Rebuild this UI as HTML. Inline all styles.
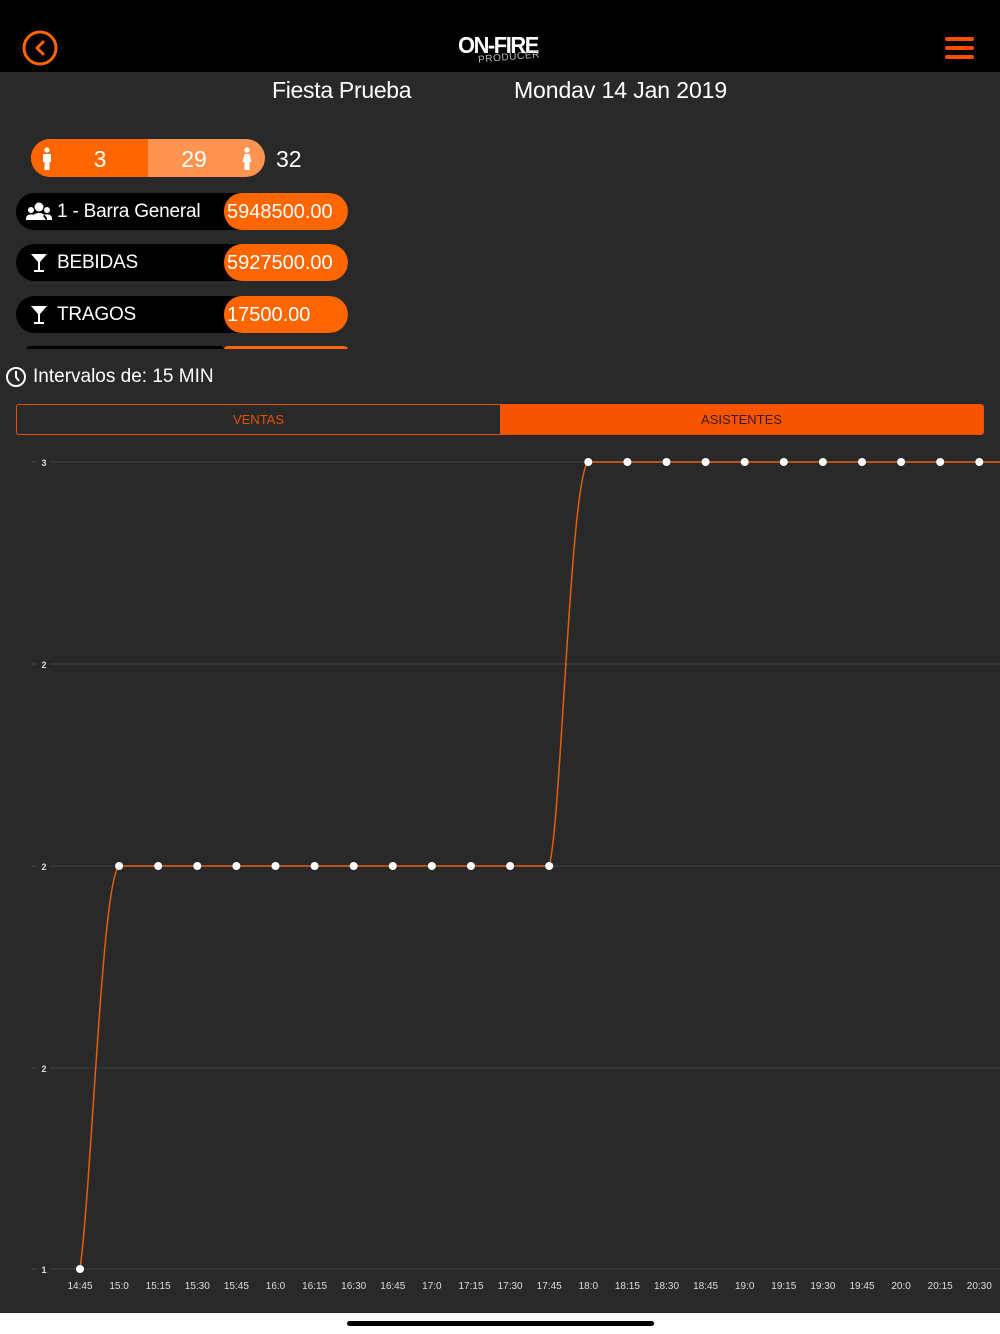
<!DOCTYPE html>
<html><head><meta charset="utf-8"><style>
*{margin:0;padding:0;box-sizing:border-box}
body{width:1000px;height:1334px;background:#292929;font-family:"Liberation Sans",sans-serif;position:relative;overflow:hidden;color:#fff}
.hdr{position:absolute;left:0;top:0;width:1000px;height:72px;background:#000}
.abs{position:absolute}
.row{position:absolute;left:16px;width:332px;height:37px;background:#000;border-radius:19px;overflow:hidden}
.row .v{position:absolute;left:208px;top:0;width:124px;height:37px;background:#ff6600;border-radius:18px;font-size:20px;line-height:38px;padding-left:3px}
.row .l{position:absolute;left:41px;top:0;font-size:19px;line-height:38px;letter-spacing:-0.2px}
</style></head><body>
<div class="hdr"></div>
<svg class="abs" style="left:22px;top:30px" width="38" height="38" viewBox="0 0 38 38"><circle cx="18" cy="18" r="16" fill="none" stroke="#ff6600" stroke-width="3"/><path d="M21 12 L15 18 L21 24" fill="none" stroke="#ff6600" stroke-width="3" stroke-linecap="round" stroke-linejoin="round"/></svg>
<div class="abs" style="left:458px;top:32px;font-weight:bold;font-size:23px;letter-spacing:-1.5px;line-height:26px;transform:scaleX(0.95);transform-origin:left">ON-FIRE</div>
<div class="abs" style="left:478px;top:52px;font-size:10px;letter-spacing:0.6px;color:#bbb;transform:rotate(-5deg)">PRODUCER</div>
<div class="abs" style="left:945px;top:37px;width:29px;height:4px;background:#ff4d00;border-radius:2px"></div>
<div class="abs" style="left:945px;top:46px;width:29px;height:4px;background:#ff4d00;border-radius:2px"></div>
<div class="abs" style="left:945px;top:55px;width:29px;height:4px;background:#ff4d00;border-radius:2px"></div>
<div class="abs" style="left:272px;top:77px;font-size:23px;letter-spacing:-0.3px">Fiesta Prueba</div>
<div class="abs" style="left:514px;top:77px;font-size:23px;letter-spacing:-0.1px">Mondav 14 Jan 2019</div>
<div class="abs" style="left:31px;top:139px;width:234px;height:38px;border-radius:19px;overflow:hidden;background:#ff9450">
<div class="abs" style="left:0;top:0;width:117px;height:38px;background:#ff6600"></div>
<div class="abs" style="left:0;top:0;width:138px;text-align:center;font-size:23px;line-height:40px">3</div>
<div class="abs" style="left:117px;top:0;width:92px;text-align:center;font-size:23px;line-height:40px">29</div>
<svg class="abs" style="left:10px;top:8px" width="12" height="24" viewBox="0 0 12 24"><circle cx="6" cy="3" r="2.6" fill="#fff"/><path d="M2 7h8v8h-1.5v8h-5v-8H2z" fill="#fff"/></svg>
<svg class="abs" style="left:210px;top:8px" width="12" height="24" viewBox="0 0 12 24"><circle cx="6" cy="3" r="2.6" fill="#fff"/><path d="M3.5 7h5l2 8h-2v8h-5v-8h-2z" fill="#fff"/></svg>
</div>
<div class="abs" style="left:276px;top:146px;font-size:23px">32</div>
<div class="row" style="top:193px"><svg class="abs" style="left:10px;top:9px" width="26" height="20" viewBox="0 0 26 20"><circle cx="13" cy="5" r="4.5" fill="#fff"/><circle cx="5" cy="8" r="3" fill="#fff"/><circle cx="21" cy="8" r="3" fill="#fff"/><path d="M5 18a8 7 0 0 1 16 0z M0 16a5 4 0 0 1 9 -2l-3 4H0z M26 16a5 4 0 0 0 -9 -2l3 4h6z" fill="#fff"/></svg><div class="l">1 - Barra General</div><div class="v">5948500.00</div></div>
<div class="row" style="top:244px"><svg class="abs" style="left:14px;top:9px" width="18" height="20" viewBox="0 0 18 20"><path d="M1 1h16l-7 8v8h4v2H4v-2h4V9z" fill="#fff"/></svg><div class="l">BEBIDAS</div><div class="v">5927500.00</div></div>
<div class="row" style="top:296px"><svg class="abs" style="left:14px;top:9px" width="18" height="20" viewBox="0 0 18 20"><path d="M1 1h16l-7 8v8h4v2H4v-2h4V9z" fill="#fff"/></svg><div class="l">TRAGOS</div><div class="v">17500.00</div></div>
<div class="abs" style="left:16px;top:346px;width:332px;height:3px;overflow:hidden"><div class="abs" style="left:10px;top:0;width:198px;height:8px;background:#000;border-radius:8px"></div><div class="abs" style="left:208px;top:0;width:124px;height:8px;background:#ff6600;border-radius:8px"></div></div>
<svg class="abs" style="left:5px;top:366px" width="22" height="22" viewBox="0 0 22 22"><circle cx="11" cy="11" r="9" fill="none" stroke="#fff" stroke-width="2"/><path d="M11 5v6l3 4" fill="none" stroke="#fff" stroke-width="2"/></svg>
<div class="abs" style="left:33px;top:366px;font-size:19px">Intervalos de: 15 MIN</div>
<div class="abs" style="left:16px;top:404px;width:968px;height:31px;border:1px solid #e55000;border-radius:3px;overflow:hidden">
<div class="abs" style="left:483px;top:0;width:485px;height:31px;background:#f75400"></div>
<div class="abs" style="left:0;top:0;width:483px;text-align:center;line-height:29px;font-size:13px;color:#e55000">VENTAS</div>
<div class="abs" style="left:483px;top:0;width:483px;text-align:center;line-height:29px;font-size:13px;color:#3a1a00">ASISTENTES</div>
</div>
<svg class="abs" style="left:0;top:0" width="1000" height="1334" viewBox="0 0 1000 1334" font-family="Liberation Sans, sans-serif">
<g stroke="#3a3a3a" stroke-width="1.5"><line x1="50" y1="462" x2="1000" y2="462"/><line x1="50" y1="664" x2="1000" y2="664"/><line x1="50" y1="866" x2="1000" y2="866"/><line x1="50" y1="1068" x2="1000" y2="1068"/><line x1="50" y1="1269" x2="1000" y2="1269"/>
<line x1="32" y1="462" x2="37" y2="462"/><line x1="32" y1="664" x2="37" y2="664"/><line x1="32" y1="866" x2="37" y2="866"/><line x1="32" y1="1068" x2="37" y2="1068"/><line x1="32" y1="1269" x2="37" y2="1269"/></g>
<g fill="#ddd" font-size="9" font-weight="bold" text-anchor="middle"><text x="44" y="466">3</text><text x="44" y="668">2</text><text x="44" y="870">2</text><text x="44" y="1072">2</text><text x="44" y="1273">1</text></g>
<path d="M80 1269 C92 1180 102 880 119 866 L549 866 C561 830 570 480 588 462 L1000 462" fill="none" stroke="#e06010" stroke-width="1.5"/>
<g fill="#fff"><circle cx="80" cy="1269" r="4"/>
<circle cx="119.1" cy="866" r="4"/><circle cx="158.2" cy="866" r="4"/><circle cx="197.3" cy="866" r="4"/><circle cx="236.4" cy="866" r="4"/><circle cx="275.5" cy="866" r="4"/><circle cx="314.6" cy="866" r="4"/><circle cx="353.7" cy="866" r="4"/><circle cx="392.8" cy="866" r="4"/><circle cx="431.9" cy="866" r="4"/><circle cx="471" cy="866" r="4"/><circle cx="510.1" cy="866" r="4"/><circle cx="549.2" cy="866" r="4"/>
<circle cx="588.3" cy="462" r="4"/><circle cx="627.4" cy="462" r="4"/><circle cx="666.5" cy="462" r="4"/><circle cx="705.6" cy="462" r="4"/><circle cx="744.7" cy="462" r="4"/><circle cx="783.8" cy="462" r="4"/><circle cx="822.9" cy="462" r="4"/><circle cx="862" cy="462" r="4"/><circle cx="901.1" cy="462" r="4"/><circle cx="940.2" cy="462" r="4"/><circle cx="979.3" cy="462" r="4"/></g>
<g fill="#ddd" font-size="10" text-anchor="middle">
<text x="80" y="1289">14:45</text><text x="119.1" y="1289">15:0</text><text x="158.2" y="1289">15:15</text><text x="197.3" y="1289">15:30</text><text x="236.4" y="1289">15:45</text><text x="275.5" y="1289">16:0</text><text x="314.6" y="1289">16:15</text><text x="353.7" y="1289">16:30</text><text x="392.8" y="1289">16:45</text><text x="431.9" y="1289">17:0</text><text x="471" y="1289">17:15</text><text x="510.1" y="1289">17:30</text><text x="549.2" y="1289">17:45</text><text x="588.3" y="1289">18:0</text><text x="627.4" y="1289">18:15</text><text x="666.5" y="1289">18:30</text><text x="705.6" y="1289">18:45</text><text x="744.7" y="1289">19:0</text><text x="783.8" y="1289">19:15</text><text x="822.9" y="1289">19:30</text><text x="862" y="1289">19:45</text><text x="901.1" y="1289">20:0</text><text x="940.2" y="1289">20:15</text><text x="979.3" y="1289">20:30</text></g>
</svg>
<div class="abs" style="left:0;top:1313px;width:1000px;height:21px;background:#fff"></div>
<div class="abs" style="left:347px;top:1321px;width:307px;height:5px;background:#000;border-radius:3px"></div>
</body></html>
